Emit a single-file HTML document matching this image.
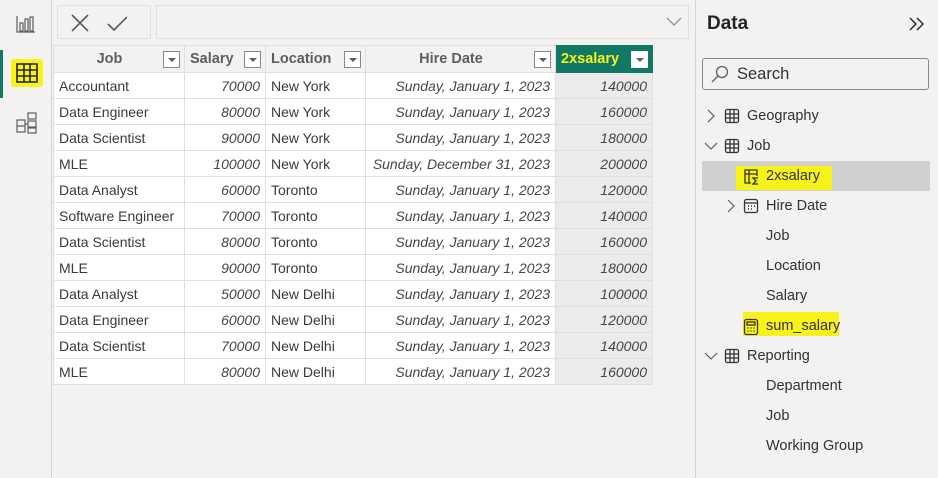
<!DOCTYPE html>
<html><head><style>
*{margin:0;padding:0;box-sizing:border-box}
body{width:938px;height:478px;background:#f3f2f1;font-family:"Liberation Sans",sans-serif;position:relative;overflow:hidden;color:#252423}
.abs{position:absolute}
table{border-collapse:collapse;position:absolute;left:53px;top:45px;font-size:14px}
td,th{border:1px solid #e1dfdd;height:26px;padding:0 5px;white-space:nowrap}
td{color:#3b3a39}
th{height:27px;background:#f3f2f1;color:#605e5c;font-size:14.5px;position:relative;text-align:left}
td{background:#fff}
td.n{text-align:right;font-style:italic;color:#484644}
td.x{background:#edebe9;text-align:right;font-style:italic;color:#484644}
.dd{position:absolute;right:4px;top:5px;width:17px;height:17px;border:1px solid #8a8886;background:#fff}
.dd:after{content:"";position:absolute;left:4px;top:6px;border-left:4px solid transparent;border-right:4px solid transparent;border-top:4px solid #605e5c}
.tree div{position:absolute;font-size:14.5px;color:#323130}
</style></head><body>
<div class="abs" style="left:0;top:0;width:52px;height:478px;background:#f3f2f1;border-right:1px solid #d6d4d2"></div>
<div class="abs" style="left:0;top:50px;width:3px;height:48px;background:#117865"></div>
<svg class="abs" style="left:16px;top:14px" width="20" height="20" viewBox="0 0 20 20" fill="none" stroke="#605e5c" stroke-width="1.2"><path d="M1 2v16h18"/><rect x="4" y="9" width="3" height="8"/><rect x="9" y="5" width="3" height="12"/><rect x="14" y="3" width="3" height="14"/></svg>
<div class="abs" style="left:11px;top:59px;width:32px;height:28px;background:#f7f21a;border-radius:3px"></div>
<svg class="abs" style="left:16px;top:63px" width="22" height="20" viewBox="0 0 22 20" fill="none" stroke="#252423" stroke-width="1.6"><rect x="1" y="1" width="20" height="18"/><path d="M1 7h20M1 13h20M8 1v18M14 1v18"/></svg>
<svg class="abs" style="left:16px;top:112px" width="22" height="22" viewBox="0 0 22 22" fill="none" stroke="#605e5c" stroke-width="1.2"><rect x="12" y="1" width="8" height="6"/><rect x="12" y="9" width="8" height="6"/><rect x="12" y="16" width="8" height="5"/><rect x="1" y="8" width="8" height="12"/><path d="M1 14h8M9 12h3"/></svg>
<div class="abs" style="left:57px;top:5px;width:94px;height:34px;border:1px solid #e1dfdd;background:#f3f2f1"></div>
<svg class="abs" style="left:70px;top:13px" width="64" height="20" viewBox="0 0 64 20" fill="none" stroke="#605e5c" stroke-width="1.6"><path d="M2 2l16 16M18 2L2 18"/><path d="M38 11l6 6 13-13"/></svg>
<div class="abs" style="left:156px;top:5px;width:533px;height:34px;border:1px solid #e1dfdd;background:#f3f2f1"></div>
<svg class="abs" style="left:666px;top:17px" width="16" height="10" viewBox="0 0 16 10" fill="none" stroke="#8a8886" stroke-width="1.2"><path d="M1 1l7 7 7-7"/></svg>
<table>
<tr><th style="width:131px;text-align:center;padding-right:24px">Job<span class="dd"></span></th><th style="width:81px">Salary<span class="dd"></span></th><th style="width:100px">Location<span class="dd"></span></th><th style="width:190px;text-align:center;padding-right:24px">Hire Date<span class="dd"></span></th><th style="width:97px;background:#117865;color:#f7f21a;border-color:#117865">2xsalary<span class="dd" style="border-color:#fff"></span></th></tr>
<tr><td>Accountant</td><td class="n">70000</td><td>New York</td><td class="n">Sunday, January 1, 2023</td><td class="x">140000</td></tr>
<tr><td>Data Engineer</td><td class="n">80000</td><td>New York</td><td class="n">Sunday, January 1, 2023</td><td class="x">160000</td></tr>
<tr><td>Data Scientist</td><td class="n">90000</td><td>New York</td><td class="n">Sunday, January 1, 2023</td><td class="x">180000</td></tr>
<tr><td>MLE</td><td class="n">100000</td><td>New York</td><td class="n">Sunday, December 31, 2023</td><td class="x">200000</td></tr>
<tr><td>Data Analyst</td><td class="n">60000</td><td>Toronto</td><td class="n">Sunday, January 1, 2023</td><td class="x">120000</td></tr>
<tr><td>Software Engineer</td><td class="n">70000</td><td>Toronto</td><td class="n">Sunday, January 1, 2023</td><td class="x">140000</td></tr>
<tr><td>Data Scientist</td><td class="n">80000</td><td>Toronto</td><td class="n">Sunday, January 1, 2023</td><td class="x">160000</td></tr>
<tr><td>MLE</td><td class="n">90000</td><td>Toronto</td><td class="n">Sunday, January 1, 2023</td><td class="x">180000</td></tr>
<tr><td>Data Analyst</td><td class="n">50000</td><td>New Delhi</td><td class="n">Sunday, January 1, 2023</td><td class="x">100000</td></tr>
<tr><td>Data Engineer</td><td class="n">60000</td><td>New Delhi</td><td class="n">Sunday, January 1, 2023</td><td class="x">120000</td></tr>
<tr><td>Data Scientist</td><td class="n">70000</td><td>New Delhi</td><td class="n">Sunday, January 1, 2023</td><td class="x">140000</td></tr>
<tr><td>MLE</td><td class="n">80000</td><td>New Delhi</td><td class="n">Sunday, January 1, 2023</td><td class="x">160000</td></tr>
</table>
<div class="abs" style="left:695px;top:0;width:243px;height:478px;border-left:1px solid #d6d4d2;background:#f3f2f1"></div>
<div class="abs" style="left:707px;top:13px;font-size:19px;font-weight:bold;color:#252423">Data</div>
<svg class="abs" style="left:908px;top:17px" width="18" height="14" viewBox="0 0 18 14" fill="none" stroke="#252423" stroke-width="1.4"><path d="M2 1l6 6-6 6M9 1l6 6-6 6"/></svg>
<div class="abs" style="left:702px;top:58px;width:227px;height:32px;border:1px solid #8a8886;border-radius:3px;background:#f3f2f1"></div>
<svg class="abs" style="left:711px;top:65px" width="18" height="18" viewBox="0 0 18 18" fill="none" stroke="#605e5c" stroke-width="1.3"><circle cx="11" cy="7" r="5.5"/><path d="M7 11l-6 6"/></svg>
<div class="abs" style="left:737px;top:65px;font-size:16.5px;color:#323130">Search</div>
<div class="abs" style="left:702px;top:161px;width:228px;height:30px;background:#d2d0ce"></div>
<div class="abs" style="left:736px;top:166px;width:96px;height:24px;background:#f7f21a"></div>
<div class="abs" style="left:743px;top:312px;width:96px;height:24px;background:#f7f21a"></div>
<svg class="abs" style="left:706px;top:109px" width="10" height="14" viewBox="0 0 10 14" fill="none" stroke="#605e5c" stroke-width="1.2"><path d="M2 1l6 6-6 6"/></svg>
<svg class="abs" style="left:704px;top:141px" width="14" height="10" viewBox="0 0 14 10" fill="none" stroke="#605e5c" stroke-width="1.2"><path d="M1 2l6 6 6-6"/></svg>
<svg class="abs" style="left:726px;top:199px" width="10" height="14" viewBox="0 0 10 14" fill="none" stroke="#605e5c" stroke-width="1.2"><path d="M2 1l6 6-6 6"/></svg>
<svg class="abs" style="left:704px;top:351px" width="14" height="10" viewBox="0 0 14 10" fill="none" stroke="#605e5c" stroke-width="1.2"><path d="M1 2l6 6 6-6"/></svg>
<div class="tree">
<div style="left:747px;top:108px">Geography</div>
<div style="left:747px;top:138px">Job</div>
<div style="left:766px;top:168px">2xsalary</div>
<div style="left:766px;top:198px">Hire Date</div>
<div style="left:766px;top:228px">Job</div>
<div style="left:766px;top:258px">Location</div>
<div style="left:766px;top:288px">Salary</div>
<div style="left:766px;top:318px">sum_salary</div>
<div style="left:747px;top:348px">Reporting</div>
<div style="left:766px;top:378px">Department</div>
<div style="left:766px;top:408px">Job</div>
<div style="left:766px;top:438px">Working Group</div>
</div>
<svg class="abs" style="left:724px;top:108px" width="16" height="16" viewBox="0 0 16 16" fill="none" stroke="#323130" stroke-width="1.3"><rect x="1.5" y="1.5" width="13" height="13" rx="2"/><path d="M1.5 6h13M1.5 10h13M6 1.5v13M10 1.5v13"/></svg>
<svg class="abs" style="left:724px;top:138px" width="16" height="16" viewBox="0 0 16 16" fill="none" stroke="#323130" stroke-width="1.3"><rect x="1.5" y="1.5" width="13" height="13" rx="2"/><path d="M1.5 6h13M1.5 10h13M6 1.5v13M10 1.5v13"/></svg>
<svg class="abs" style="left:724px;top:348px" width="16" height="16" viewBox="0 0 16 16" fill="none" stroke="#323130" stroke-width="1.3"><rect x="1.5" y="1.5" width="13" height="13" rx="2"/><path d="M1.5 6h13M1.5 10h13M6 1.5v13M10 1.5v13"/></svg>
<svg class="abs" style="left:743px;top:168px" width="18" height="18" viewBox="0 0 18 18" fill="none" stroke="#323130" stroke-width="1.3"><path d="M8 15H2V2h12v6M2 6h12M6 2v13"/><path d="M15 10h-5l3 3-3 3h5"/></svg>
<svg class="abs" style="left:743px;top:198px" width="16" height="16" viewBox="0 0 16 16" fill="none" stroke="#323130" stroke-width="1.3"><rect x="1.5" y="1.5" width="13" height="13" rx="2"/><path d="M1.5 5h13"/><path d="M5 8h1M8 8h1M11 8h1M5 11h1M8 11h1" stroke-width="1.5"/></svg>
<svg class="abs" style="left:743px;top:318px" width="16" height="18" viewBox="0 0 16 18" fill="none" stroke="#323130" stroke-width="1.3"><rect x="1.5" y="1.5" width="13" height="15" rx="2"/><rect x="4" y="4" width="8" height="3"/><path d="M4.5 10h1M7.5 10h1M10.5 10h1M4.5 13h1M7.5 13h1M10.5 13h1" stroke-width="1.6"/></svg>
</body></html>
